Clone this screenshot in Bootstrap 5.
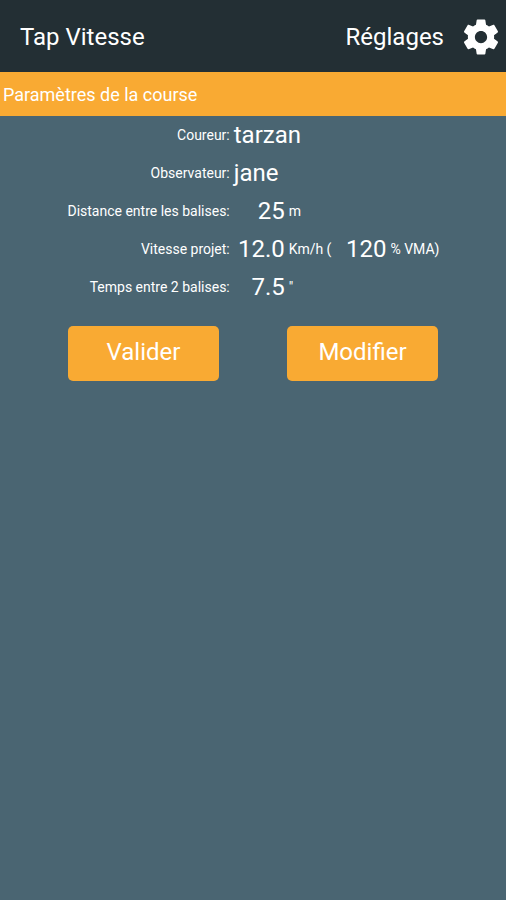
<!DOCTYPE html>
<html lang="fr">
<head>
<meta charset="utf-8">
<meta name="viewport" content="width=device-width, initial-scale=1">
<title>Tap Vitesse</title>
<link href="https://cdn.jsdelivr.net/npm/bootstrap@5.3.0/dist/css/bootstrap.min.css" rel="stylesheet">
<style>
  body { background: #4a6572; color: #fff; font-family: Roboto, "Liberation Sans", sans-serif; }
  .topbar { background: #232f34; height: 72px; padding: 2px 4px 0 20px; font-size: 24px; line-height: 32px; }
  .topbar h1 { font-size: 24px; line-height: 32px; font-weight: 400; }
  .settings-link { gap: 16px; }
  .settings-link svg { width: 42px; height: 42px; }
  .section-title { background: #f9aa33; height: 44px; padding: 2px 3px 0; font-size: 18px; line-height: 28px; font-weight: 400; }
  .param-row { height: 38px; font-size: 14px; }
  .param-row dt { width: 46%; padding-right: 3px; font-weight: 400; text-align: right; }
  .param-row dd { gap: 4px; padding-left: 1px; }
  .value { font-size: 24px; line-height: 36px; }
  .value-num { width: 51px; text-align: right; }
  .actions { padding: 20px 68px; gap: 68px; }
  .btn-action { --bs-btn-color: #fff; --bs-btn-bg: #f9aa33; --bs-btn-hover-color: #fff; --bs-btn-hover-bg: #e99a23; --bs-btn-active-color: #fff; --bs-btn-active-bg: #df9018; height: 55px; padding: 0 0 3px; border: 0; border-radius: 5px; font-size: 24px; }
</style>
<script src="https://cdn.jsdelivr.net/npm/bootstrap@5.3.0/dist/js/bootstrap.bundle.min.js" defer></script>
</head>
<body class="min-vh-100">
<header class="topbar d-flex align-items-center justify-content-between">
  <h1 class="m-0">Tap Vitesse</h1>
  <a href="#" class="settings-link d-flex align-items-center text-white text-decoration-none">
    Réglages
    <svg viewBox="0 0 24 24" fill="currentColor" aria-hidden="true"><path d="M19.43 12.98c.04-.32.07-.64.07-.98s-.03-.66-.07-.98l2.11-1.65c.19-.15.24-.42.12-.64l-2-3.46c-.12-.22-.39-.3-.61-.22l-2.49 1c-.52-.4-1.08-.73-1.69-.98l-.38-2.65C14.46 2.18 14.25 2 14 2h-4c-.25 0-.46.18-.49.42l-.38 2.65c-.61.25-1.17.59-1.69.98l-2.49-1c-.23-.09-.49 0-.61.22l-2 3.46c-.13.22-.07.49.12.64l2.11 1.65c-.04.32-.07.65-.07.98s.03.66.07.98l-2.11 1.65c-.19.15-.24.42-.12.64l2 3.46c.12.22.39.3.61.22l2.49-1c.52.4 1.08.73 1.69.98l.38 2.65c.03.24.24.42.49.42h4c.25 0 .46-.18.49-.42l.38-2.65c.61-.25 1.17-.59 1.69-.98l2.49 1c.23.09.49 0 .61-.22l2-3.46c.12-.22.07-.49-.12-.64l-2.11-1.65zM12 15.5c-1.93 0-3.5-1.57-3.5-3.5s1.57-3.5 3.5-3.5 3.5 1.57 3.5 3.5-1.57 3.5-3.5 3.5z"/></svg>
  </a>
</header>
<main>
  <h2 class="section-title d-flex align-items-center m-0">Paramètres de la course</h2>
  <dl class="m-0">
    <div class="param-row d-flex align-items-center">
      <dt>Coureur:</dt>
      <dd class="d-flex align-items-center m-0"><span class="value">tarzan</span></dd>
    </div>
    <div class="param-row d-flex align-items-center">
      <dt>Observateur:</dt>
      <dd class="d-flex align-items-center m-0"><span class="value">jane</span></dd>
    </div>
    <div class="param-row d-flex align-items-center">
      <dt>Distance entre les balises:</dt>
      <dd class="d-flex align-items-center m-0"><span class="value value-num">25</span><span>m</span></dd>
    </div>
    <div class="param-row d-flex align-items-center">
      <dt>Vitesse projet:</dt>
      <dd class="d-flex align-items-center m-0"><span class="value value-num">12.0</span><span>Km/h (</span><span class="value value-num">120</span><span>% VMA)</span></dd>
    </div>
    <div class="param-row d-flex align-items-center">
      <dt>Temps entre 2 balises:</dt>
      <dd class="d-flex align-items-center m-0"><span class="value value-num">7.5</span><span>"</span></dd>
    </div>
  </dl>
  <div class="actions d-flex">
    <button type="button" class="btn btn-action flex-fill w-50">Valider</button>
    <button type="button" class="btn btn-action flex-fill w-50">Modifier</button>
  </div>
</main>
</body>
</html>
